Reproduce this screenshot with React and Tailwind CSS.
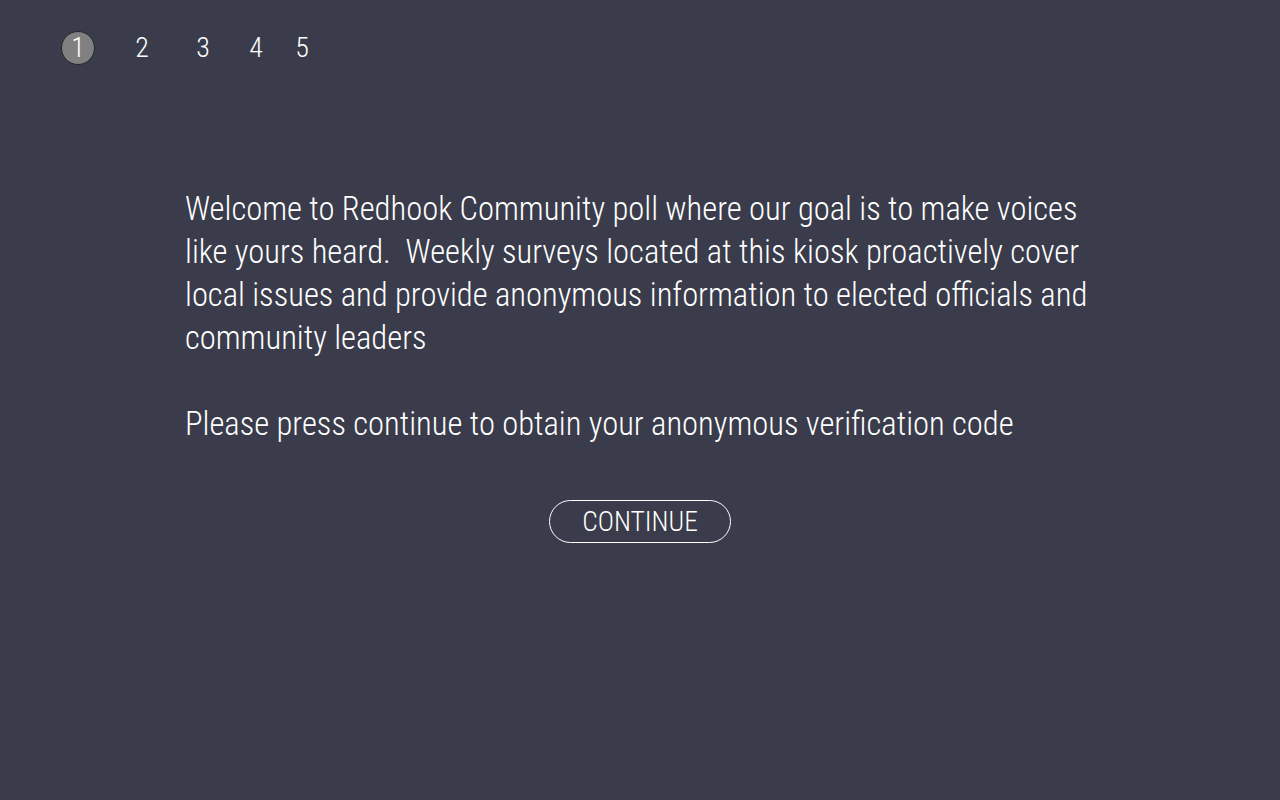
import React from 'react';

const steps = [
  { n: 1, gap: '' },
  { n: 2, gap: 'ml-[30px]' },
  { n: 3, gap: 'ml-[27px]' },
  { n: 4, gap: 'ml-[19px]' },
  { n: 5, gap: 'ml-[12px]' },
];

export default function App() {
  return (
    <div className="min-h-screen w-full bg-[#3a3c4b] text-white font-['Roboto',sans-serif] font-light font-stretch-condensed">
      {/* step indicator */}
      <div className="flex items-center pl-[61px] pt-[31px] text-[28px] leading-[34px]">
        {steps.map((s) => (
          <span
            key={s.n}
            className={
              s.n === 1
                ? 'flex h-[34px] w-[34px] items-center justify-center rounded-full border border-[#26272d] bg-[#808080]'
                : `flex h-[34px] w-[34px] items-center justify-center ${s.gap}`
            }
          >
            {s.n}
          </span>
        ))}
      </div>

      {/* intro text */}
      <div className="ml-[185px] mt-[123px] w-[925px] text-[32.6px] leading-[43px]">
        <p>
          Welcome to Redhook Community poll where our goal is to make voices like yours heard.&nbsp; Weekly surveys
          located at this kiosk proactively cover local issues and provide anonymous information to elected officials
          and community leaders
        </p>
        <p className="mt-[43px]">Please press continue to obtain your anonymous verification code</p>
      </div>

      <div className="mt-[54px] flex justify-center">
        <button className="flex h-[43px] w-[182px] items-center justify-center rounded-full border border-white text-[27.5px] leading-none">
          CONTINUE
        </button>
      </div>
    </div>
  );
}
